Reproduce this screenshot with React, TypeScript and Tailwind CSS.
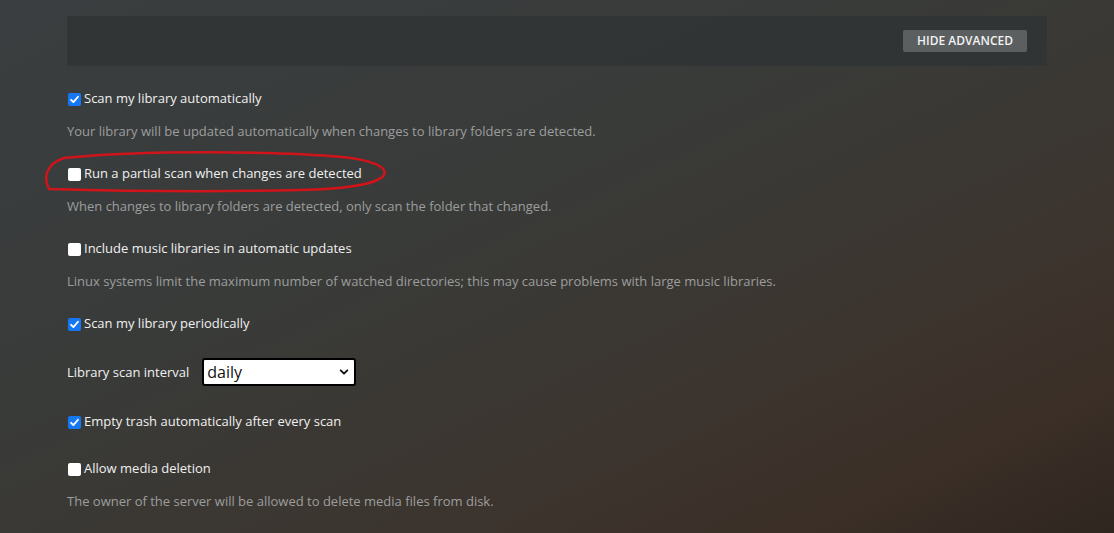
import { useState } from "react";

type Opt = { id: string; label: string; hint?: string; on: boolean };

function Box({ on }: { on: boolean }) {
  return on ? (
    <span className="flex h-[13px] w-[13px] shrink-0 items-center justify-center rounded-[2px] bg-[#1677f2]">
      <svg viewBox="0 0 12 12" className="h-[11px] w-[11px]" fill="none">
        <path d="M2.3 6.3 4.8 8.8 9.8 3" stroke="#fff" strokeWidth="2" strokeLinecap="round" strokeLinejoin="round" />
      </svg>
    </span>
  ) : (
    <span className="h-[13px] w-[13px] shrink-0 rounded-[2px] bg-white" />
  );
}

function Row({ opt, onToggle }: { opt: Opt; onToggle: () => void }) {
  return (
    <div>
      <label className="flex h-5 cursor-pointer items-center gap-[3px] pl-px text-[13px] text-[#f0f0f0]" onClick={onToggle}>
        <Box on={opt.on} />
        <span>{opt.label}</span>
      </label>
      {opt.hint && <p className="mt-3 h-5 text-[13px] leading-5 text-[#9c9e9e]">{opt.hint}</p>}
    </div>
  );
}

export default function App() {
  const [opts, setOpts] = useState<Opt[]>([
    { id: "auto", label: "Scan my library automatically", hint: "Your library will be updated automatically when changes to library folders are detected.", on: true },
    { id: "partial", label: "Run a partial scan when changes are detected", hint: "When changes to library folders are detected, only scan the folder that changed.", on: false },
    { id: "music", label: "Include music libraries in automatic updates", hint: "Linux systems limit the maximum number of watched directories; this may cause problems with large music libraries.", on: false },
    { id: "periodic", label: "Scan my library periodically", on: true },
    { id: "trash", label: "Empty trash automatically after every scan", on: true },
    { id: "delete", label: "Allow media deletion", hint: "The owner of the server will be allowed to delete media files from disk.", on: false },
  ]);
  const toggle = (id: string) => setOpts((o) => o.map((x) => (x.id === id ? { ...x, on: !x.on } : x)));
  const get = (id: string) => opts.find((x) => x.id === id)!;

  return (
    <div
      className="relative h-[533px] w-full overflow-hidden bg-[linear-gradient(155deg,#3a3e40_0%,#393b39_40%,#3c352f_68%,#3b2f27_86%,#2f2620_100%)] px-[67px] pt-4"
      style={{ fontFamily: '"Open Sans", "Noto Sans", sans-serif' }}
    >
      {/* Top toolbar */}
      <div className="flex h-[50px] items-center justify-end bg-[#2f3334]/80 pr-5">
        <button className="h-[22px] rounded-[2px] bg-[#5b5f60] px-[14px] text-[12px] font-semibold uppercase leading-[22px] text-[#f2f2f2]">
          Hide Advanced
        </button>
      </div>

      <div className="mt-[23px] flex flex-col">
        <Row opt={get("auto")} onToggle={() => toggle("auto")} />
        <div className="mt-[23px]">
          <Row opt={get("partial")} onToggle={() => toggle("partial")} />
        </div>
        <div className="mt-[23px]">
          <Row opt={get("music")} onToggle={() => toggle("music")} />
        </div>
        <div className="mt-[23px]">
          <Row opt={get("periodic")} onToggle={() => toggle("periodic")} />
        </div>

        <div className="mt-[24px] flex h-7 items-center gap-[13px] text-[13px] text-[#f0f0f0]">
          <span className="pt-[2px]">Library scan interval</span>
          <div className="relative">
            <select
              defaultValue="daily"
              className="h-7 w-[154px] appearance-none rounded-[3px] border-2 border-black bg-white pl-[3px] text-[16px] text-[#111] outline-none"
            >
              <option value="hourly">every hour</option>
              <option value="daily">daily</option>
              <option value="weekly">weekly</option>
            </select>
            <svg viewBox="0 0 12 12" className="pointer-events-none absolute right-[7px] top-[9px] h-[10px] w-[10px]" fill="none">
              <path d="M2 4 6 8 10 4" stroke="#111" strokeWidth="2.2" strokeLinecap="round" strokeLinejoin="round" />
            </svg>
          </div>
        </div>

        <div className="mt-[26px]">
          <Row opt={get("trash")} onToggle={() => toggle("trash")} />
        </div>
        <div className="mt-[27px]">
          <Row opt={get("delete")} onToggle={() => toggle("delete")} />
        </div>
      </div>

      {/* Hand-drawn red annotation around the partial scan option */}
      <svg className="pointer-events-none absolute left-0 top-0" width="1114" height="533" fill="none">
        <path
          d="M49 189 C43 178 46 164 64 158 C140 150 280 151 342 157 C372 160 388 167 384 175 C378 184 346 189 300 190 C220 192 120 191 49 189"
          stroke="#d0141a"
          strokeWidth="2.5"
          strokeLinecap="round"
        />
      </svg>
    </div>
  );
}
